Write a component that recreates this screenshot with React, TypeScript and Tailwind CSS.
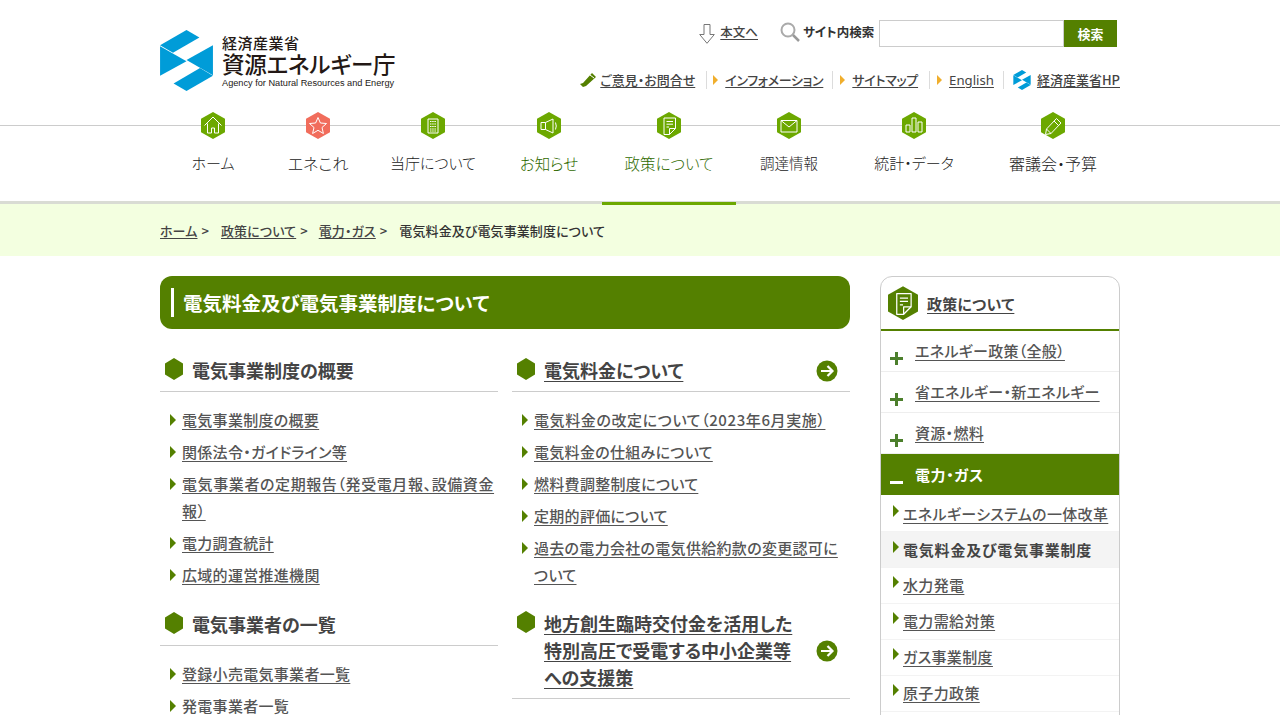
import React from 'react';

const HEX = '12,0 24,6.8 24,20.2 12,27 0,20.2 0,6.8';

const Hex: React.FC<{ color?: string; className?: string; children?: React.ReactNode }> = ({ color = '#6ca800', className = 'w-6 h-[27px]', children }) => (
  <svg viewBox="0 0 24 27" className={className}>
    <polygon points={HEX} fill={color} />
    <g fill="none" stroke="#fff" strokeWidth="1" strokeLinejoin="round">{children}</g>
  </svg>
);

const DocIcon = () => (
  <>
    <path d="M7 6h11.500v10.500l-6 6H7z" />
    <path d="M12.500 22.500v-6h6" />
    <path d="M9.500 9.500h6.500M9.500 12.200h6.500M9.500 15h2.500" />
  </>
);

const navItems: { label: string; width: string; size: string; active?: boolean; text?: string; color?: string; icon: React.ReactNode }[] = [
  { label: 'ホーム', width: 'w-[106px]', size: 'text-[15px]', icon: <path d="M3.500 13.500 12 5l8.500 8.500M6.500 11.500V21h4v-5h3v5h4v-9.500" /> },
  { label: 'エネこれ', width: 'w-[104px]', size: 'text-[16px]', color: '#f16d5c', icon: <polygon points="12,5.500 14.400,11 20.500,11.500 16,15.500 17.400,21.500 12,18.300 6.600,21.500 8,15.500 3.500,11.500 9.600,11" /> },
  { label: '当庁について', width: 'w-[126px]', size: 'text-[15px]', icon: <><rect x="7" y="7" width="10" height="14" /><path d="M9 9.500h6M9 12h6M9 14.500h6M9 17h6M9 19h6" strokeDasharray="1.500 .7" /></> },
  { label: 'お知らせ', width: 'w-[106px]', size: 'text-[15.500px]', text: 'text-[#2f6a00] font-light', icon: <><path d="M4 10.500h4.500l7.500-3.500v14l-7.500-3.500H4z" /><path d="M8.500 10.500v7M18.500 10.500q1.500 3.500 0 7" /></> },
  { label: '政策について', width: 'w-[134px]', size: 'text-[15.500px]', text: 'text-[#2f6a00] font-light', active: true, icon: <DocIcon /> },
  { label: '調達情報', width: 'w-[106px]', size: 'text-[14.500px]', icon: <><rect x="4" y="8.500" width="16" height="11.500" /><path d="M4 8.500 12 15l8-6.500" /></> },
  { label: '統計・データ', width: 'w-[144px]', size: 'text-[15px]', icon: <><rect x="4" y="13" width="4" height="7" /><rect x="10" y="6" width="4" height="14" /><rect x="16" y="10" width="4" height="10" /></> },
  { label: '審議会・予算', width: 'w-[134px]', size: 'text-[16px]', icon: <><path d="m5.500 17 10-10.500 4.500 4.500-10 10.500-5.500 1z" /><path d="m13 9 4.500 4.500M5.500 17l4.500 4.500" /></> },
];

const Logo: React.FC<{ className: string }> = ({ className }) => (
  <svg viewBox="0 0 52 60" className={className}>
    <g fill="#009cd8">
      <polygon points="26,0 38.700,7.300 12.700,22.300 0,15" />
      <polygon points="0,16 26,30.700 0,45" />
      <polygon points="52,15 52,44.500 26,29.500" />
      <polygon points="26,60 13.300,52.700 39.300,37.300 52,45" />
    </g>
  </svg>
);

const Tri: React.FC<{ className?: string; color?: string }> = ({ className = 'w-[6px] h-3', color = '#548000' }) => (
  <svg viewBox="0 0 6 12" className={className}>
    <polygon points="0,0 6,6 0,12" fill={color} />
  </svg>
);

const Sep = () => <span className="block w-px h-[18px] bg-[#dcdcdc]" />;

const ArrowCircle = () => (
  <svg viewBox="0 0 22 22" className="w-[22px] h-[22px] shrink-0">
    <circle cx="11" cy="11" r="10.500" fill="#548000" />
    <path d="M5 11h11M11.500 6l5 5-5 5" fill="none" stroke="#fff" strokeWidth="2.200" />
  </svg>
);

const SectionHead: React.FC<{ title: React.ReactNode; link?: boolean; arrow?: boolean; lines?: boolean }> = ({ title, link, arrow, lines }) => (
  <div className={`flex border-b border-[#ccc] pl-[5px] pr-3 relative ${lines ? 'pb-[7px] pt-px' : 'pb-[7px] pt-[2px]'}`}>
    <svg viewBox="0 0 18 22" className="w-[18px] h-[22px] shrink-0 mt-[1px]">
      <polygon points="9,0 18,5.500 18,16.500 9,22 0,16.500 0,5.500" fill="#548000" />
    </svg>
    <h2 className={`flex-1 ml-[9px] text-[18px] leading-[27px] font-bold text-[#444] ${link ? 'underline underline-offset-[3px]' : ''}`}>{title}</h2>
    {arrow && <span className="self-center ml-3"><ArrowCircle /></span>}
  </div>
);

const LinkList: React.FC<{ items: string[] }> = ({ items }) => (
  <ul className="pt-[14px] pb-[21px] pl-[10px] flex flex-col gap-[5px]">
    {items.map((t) => (
      <li key={t} className={`flex text-[15px] leading-[27px] font-medium text-[#555] ${t.includes('（') ? 'tracking-[0.6px]' : 'tracking-[0.3px]'}`}>
        <Tri className="w-[6px] h-3 shrink-0 mt-[8px] mr-[6px]" />
        <a className="underline underline-offset-[3px]">{t}</a>
      </li>
    ))}
  </ul>
);

const sideMain = ['エネルギー政策（全般）', '省エネルギー・新エネルギー', '資源・燃料'];
const sideSub = ['エネルギーシステムの一体改革', '電気料金及び電気事業制度', '水力発電', '電力需給対策', 'ガス事業制度', '原子力政策'];

const App: React.FC = () => {
  return (
    <div className="h-screen overflow-hidden bg-white font-['Noto_Sans_CJK_JP','Noto_Sans',sans-serif] [font-feature-settings:'palt']">
      {/* Header */}
      <header className="w-[960px] mx-auto h-[112px] flex justify-between">
        <div className="flex items-start pt-[30px]">
          <Logo className="w-[53px] h-[61px]" />
          <div className="ml-[9px] mt-[3px] text-[#231815]">
            <div className="text-[15px] leading-[19px] tracking-[0.5px] font-medium">経済産業省</div>
            <div className="text-[22.500px] leading-[22px] font-medium tracking-[-0.2px] whitespace-nowrap">資源エネルギー庁</div>
            <div className="text-[9.200px] leading-[13px] mt-[3px] font-['Liberation_Sans',sans-serif] whitespace-nowrap">Agency for Natural Resources and Energy</div>
          </div>
        </div>
        <div className="flex flex-col items-end pt-[20px]">
          <div className="flex items-center h-[27px] mr-[3px]">
            <svg viewBox="0 0 16 20" className="w-4 h-5 mr-[5px]">
              <path d="M5 .5h6v10h4.300L8 19.300.7 10.500H5z" fill="#fff" stroke="#777" />
            </svg>
            <a className="text-[12.500px] font-medium text-[#444] underline underline-offset-2 -mt-[2px]">本文へ</a>
            <svg viewBox="0 0 20 20" className="w-5 h-5 ml-[22px] mr-[3px] -mt-[3px]">
              <circle cx="8" cy="8" r="6.500" fill="none" stroke="#aaa" strokeWidth="2" />
              <path d="m13 13 6 6" stroke="#999" strokeWidth="2.500" />
            </svg>
            <span className="text-[12.500px] font-bold text-[#333] w-[76px] whitespace-nowrap -mt-[2px]">サイト内検索</span>
            <input className="w-[185px] h-[27px] border border-[#ccc] bg-white" />
            <button className="w-[53px] h-[27px] bg-[#548000] text-white text-[13px] font-bold">検索</button>
          </div>
          <div className="flex items-center h-[22px] mt-[22px] text-[13px] font-medium text-[#444] whitespace-nowrap">
            <svg viewBox="0 0 16 16" className="w-4 h-4 mr-1">
              <path d="m0 12 3 3 3-1 10-9-4-4-9 10z" fill="#548000" />
              <path d="m10 3 4 3" stroke="#fff" strokeWidth="1" />
            </svg>
            <a className="underline underline-offset-2">ご意見・お問合せ</a>
            <span className="ml-[11px] mr-[6px]"><Sep /></span>
            <Tri className="w-[5px] h-[10px] mr-[7px]" color="#f0ae2c" />
            <a className="underline underline-offset-2 tracking-[-0.3px]">インフォメーション</a>
            <span className="ml-[9px] mr-[7px]"><Sep /></span>
            <Tri className="w-[5px] h-[10px] mr-[7px]" color="#f0ae2c" />
            <a className="underline underline-offset-2 tracking-[-0.3px]">サイトマップ</a>
            <span className="ml-[11px] mr-[7px]"><Sep /></span>
            <Tri className="w-[5px] h-[10px] mr-[7px]" color="#f0ae2c" />
            <a className="underline underline-offset-2 text-[13.200px] font-normal font-['Noto_Sans',sans-serif] mt-px">English</a>
            <span className="ml-[9px] mr-[9px]"><Sep /></span>
            <Logo className="w-[18px] h-[20px] mr-[6px]" />
            <a className="underline underline-offset-2">経済産業省HP</a>
          </div>
        </div>
      </header>

      {/* Global nav */}
      <nav className="mt-[13px] border-t border-[#ccc] border-b-[3px] border-b-[#d9dcd4] h-[79px]">
        <ul className="w-[960px] mx-auto flex h-[76px]">
          {navItems.map((n) => (
            <li key={n.label} className={`${n.width} h-[79px] flex flex-col items-center ${n.active ? 'border-b-[3px] border-[#6ca800]' : ''}`}>
              <span className="-mt-[14px]"><Hex color={n.color}>{n.icon}</Hex></span>
              <span className={`mt-[12px] ${n.size} leading-[24px] whitespace-nowrap ${n.text ?? 'text-[#222] font-light'}`}>{n.label}</span>
            </li>
          ))}
        </ul>
      </nav>

      {/* Breadcrumb */}
      <div className="h-[52px] bg-[#f3ffe0] flex items-center pt-px">
        <ol className="w-[960px] mx-auto flex text-[13px] font-medium tracking-[0.1px] text-[#444] whitespace-nowrap">
          <li className="mr-[12px]"><a className="underline underline-offset-2">ホーム</a><span className="ml-1">&gt;</span></li>
          <li className="mr-[11px]"><a className="underline underline-offset-2">政策について</a><span className="ml-1">&gt;</span></li>
          <li className="mr-[12px]"><a className="underline underline-offset-2">電力・ガス</a><span className="ml-1">&gt;</span></li>
          <li className="text-[#333]">電気料金及び電気事業制度について</li>
        </ol>
      </div>

      {/* Body */}
      <div className="w-[960px] mx-auto pt-[20px] flex justify-between items-start">
        <main className="w-[690px]">
          <div className="h-[53px] rounded-[12px] bg-[#548000] flex items-center pl-[11px]">
            <span className="w-[3px] h-[29px] bg-white mr-[9px]" />
            <h1 className="text-[19.500px] font-bold text-white">電気料金及び電気事業制度について</h1>
          </div>
          <div className="grid grid-cols-2 gap-x-[14px] mt-[26px]">
            <section>
              <SectionHead title="電気事業制度の概要" />
              <LinkList items={['電気事業制度の概要', '関係法令・ガイドライン等', '電気事業者の定期報告（発受電月報、設備資金報）', '電力調査統計', '広域的運営推進機関']} />
              <SectionHead title="電気事業者の一覧" />
              <LinkList items={['登録小売電気事業者一覧', '発電事業者一覧']} />
            </section>
            <section>
              <SectionHead title="電気料金について" link arrow />
              <LinkList items={['電気料金の改定について（2023年6月実施）', '電気料金の仕組みについて', '燃料費調整制度について', '定期的評価について', '過去の電力会社の電気供給約款の変更認可について']} />
              <SectionHead title="地方創生臨時交付金を活用した特別高圧で受電する中小企業等への支援策" link arrow lines />
            </section>
          </div>
        </main>

        {/* Side menu: runs on below the fold */}
        <aside className="w-[240px] h-[600px] border border-[#ccc] rounded-[12px] overflow-hidden">
          <div className="h-[54px] border-b-2 border-[#548000] flex items-center pl-[7px]">
            <Hex color="#548000" className="w-[30px] h-[34px]"><DocIcon /></Hex>
            <a className="ml-[9px] mt-[2px] text-[15px] font-bold tracking-[0.2px] text-[#444] underline underline-offset-[3px]">政策について</a>
          </div>
          {sideMain.map((t) => (
            <div key={t} className="h-[41px] border-b border-[#eee] flex text-[15px] font-medium tracking-[0.3px] text-[#555] pl-[9px]">
              <span className="relative w-[13px] h-[13px] mt-[21px] mr-[12px] shrink-0">
                <span className="absolute left-0 top-[5px] w-[13px] h-[3px] bg-[#4c7f2c]" />
                <span className="absolute left-[5px] top-0 w-[3px] h-[13px] bg-[#4c7f2c]" />
              </span>
              <a className="underline underline-offset-[3px] leading-[40px]">{t}</a>
            </div>
          ))}
          <div className="h-[41px] bg-[#548000] flex text-[15px] font-bold tracking-[0.6px] text-white pl-[9px]">
            <span className="w-[13px] h-[3px] bg-white mt-[27px] mr-[12px] shrink-0" />
            <span className="leading-[41px]">電力・ガス</span>
          </div>
          {sideSub.map((t, i) => (
            <div key={t} className={`h-[36px] border-b border-[#f3f3f3] flex text-[15px] text-[#555] pl-[12px] ${i === 0 ? 'mt-px' : ''} ${i === 1 ? 'bg-[#f4f4f4] font-bold tracking-[0.8px]' : 'font-medium tracking-[0.35px]'}`}>
              <Tri className={`w-[6px] h-3 shrink-0 mr-[4px] ${i > 1 ? 'mt-[8px]' : 'mt-[9px]'}`} />
              {i === 1 ? (
                <span className="leading-[36px] text-[#444]">{t}</span>
              ) : (
                <a className={`underline underline-offset-[3px] ${i > 1 ? 'leading-[34px]' : 'leading-[36px]'}`}>{t}</a>
              )}
            </div>
          ))}
        </aside>
      </div>
    </div>
  );
};

export default App;
